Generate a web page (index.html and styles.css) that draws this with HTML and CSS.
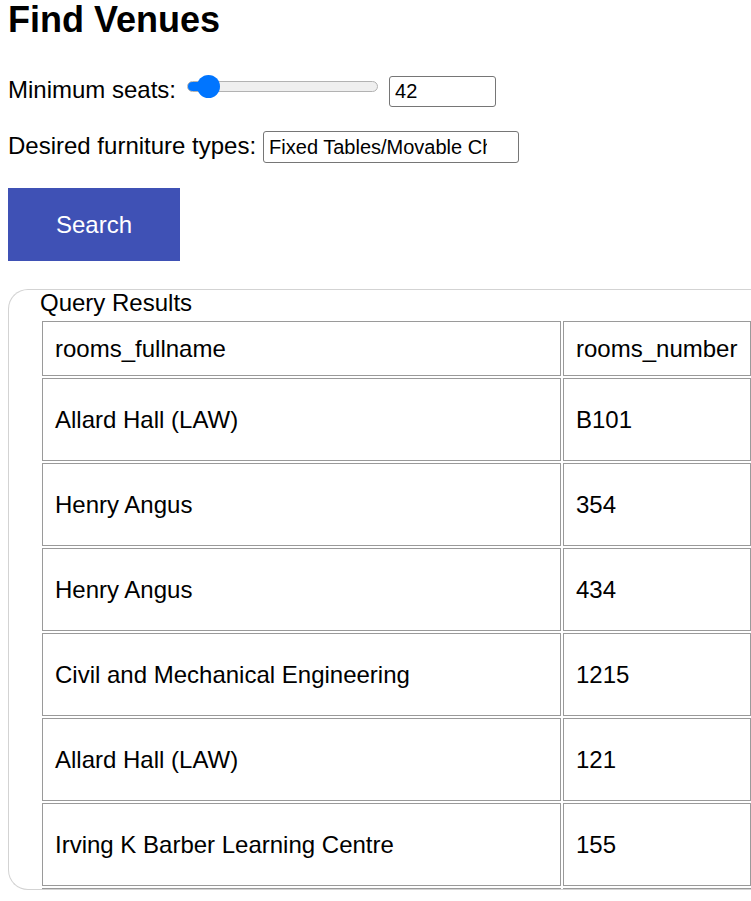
FILE: index.html
```html
<!DOCTYPE html>
<html lang="en">
<head>
<meta charset="utf-8">
<title>Find Venues</title>
<link rel="stylesheet" href="styles.css">
</head>
<body>
  <h1 class="title">Find Venues</h1>
  <div class="form-row row-seats">
    <label class="label" for="seats">Minimum seats:</label>
    <input class="range" id="seats" type="range" min="0" max="743" value="42" style="--fill: 11%">
    <input class="num-input" type="number" value="42">
  </div>
  <div class="form-row row-furn">
    <label class="label" for="furn">Desired furniture types:</label>
    <input class="text-input" id="furn" type="text" value="Fixed Tables/Movable Chairs">
  </div>
  <button class="search-btn" type="button">Search</button>
  <div class="results">
    <div class="results-title">Query Results</div>
    <table class="results-table">
      <thead>
        <tr><th class="col-name">rooms_fullname</th><th class="col-num">rooms_number</th></tr>
      </thead>
      <tbody>
        <tr><td>Allard Hall (LAW)</td><td>B101</td></tr>
        <tr><td>Henry Angus</td><td>354</td></tr>
        <tr><td>Henry Angus</td><td>434</td></tr>
        <tr><td>Civil and Mechanical Engineering</td><td>1215</td></tr>
        <tr><td>Allard Hall (LAW)</td><td>121</td></tr>
        <tr><td>Irving K Barber Learning Centre</td><td>155</td></tr>
        <tr><td></td><td></td></tr>
      </tbody>
    </table>
  </div>
</body>
</html>
```

FILE: styles.css
```css
html {
  overflow: hidden;
}

body {
  margin: 0 0 8px 8px;
  font-family: "Liberation Sans", Arial, sans-serif;
  font-size: 24px;
  color: #000;
  background: #fff;
}

.title {
  margin: 0;
  font-size: 36px;
  font-weight: bold;
  line-height: 40px;
}

.form-row {
  display: flex;
  align-items: baseline;
}

.row-seats {
  margin-top: 36px;
}

.row-furn {
  margin-top: 24px;
}

.label {
  white-space: nowrap;
}

.range {
  -webkit-appearance: none;
  appearance: none;
  align-self: flex-start;
  width: 191px;
  height: 23px;
  margin: -1px 0 0 11px;
  padding: 0;
  background: transparent;
}

.range::-webkit-slider-runnable-track {
  height: 11px;
  box-sizing: border-box;
  border-radius: 6px;
  border: 1px solid #b2b2b2;
  background: linear-gradient(to right, #0075ff 0, #0075ff var(--fill), #efefef var(--fill));
}

.range::-webkit-slider-thumb {
  -webkit-appearance: none;
  appearance: none;
  width: 23px;
  height: 23px;
  margin-top: -7px;
  border: none;
  border-radius: 50%;
  background: #0075ff;
}

.num-input,
.text-input {
  font-family: "Liberation Sans", Arial, sans-serif;
  font-size: 20px;
  color: #000;
  background: #fff;
  border: 1px solid #767676;
  border-radius: 3px;
  padding: 3px 5px;
  box-sizing: border-box;
  height: 31px;
  line-height: normal;
}

.num-input {
  width: 107px;
  margin-left: 11px;
  -moz-appearance: textfield;
}

.num-input::-webkit-inner-spin-button,
.num-input::-webkit-outer-spin-button {
  -webkit-appearance: none;
  margin: 0;
}

.text-input {
  width: 256px;
  height: 32px;
  margin-left: 7px;
  padding-left: 5px;
  padding-right: 31px;
}

.search-btn {
  display: block;
  margin-top: 25px;
  width: 172px;
  height: 73px;
  padding: 0;
  border: none;
  border-radius: 0;
  background: #3f51b5;
  color: #fff;
  font-family: "Liberation Sans", Arial, sans-serif;
  font-size: 24px;
}

.results {
  margin-top: 28px;
  height: 601px;
  box-sizing: border-box;
  border: 1px solid #d3d3d3;
  border-right: none;
  border-radius: 20px 0 0 20px;
  padding-left: 31px;
  overflow: hidden;
}

.results-title {
  line-height: 25px;
  margin-bottom: 4px;
}

.results-table {
  width: 713px;
  border-collapse: separate;
  border-spacing: 2px;
}

.results-table th,
.results-table td {
  border: 1px solid #9a9a9a;
  text-align: left;
  font-weight: normal;
  line-height: 27px;
  white-space: nowrap;
}

.results-table th {
  padding: 13px 12px;
}

.results-table td {
  padding: 27px 12px;
}

.col-name {
  width: 493px;
}
```
